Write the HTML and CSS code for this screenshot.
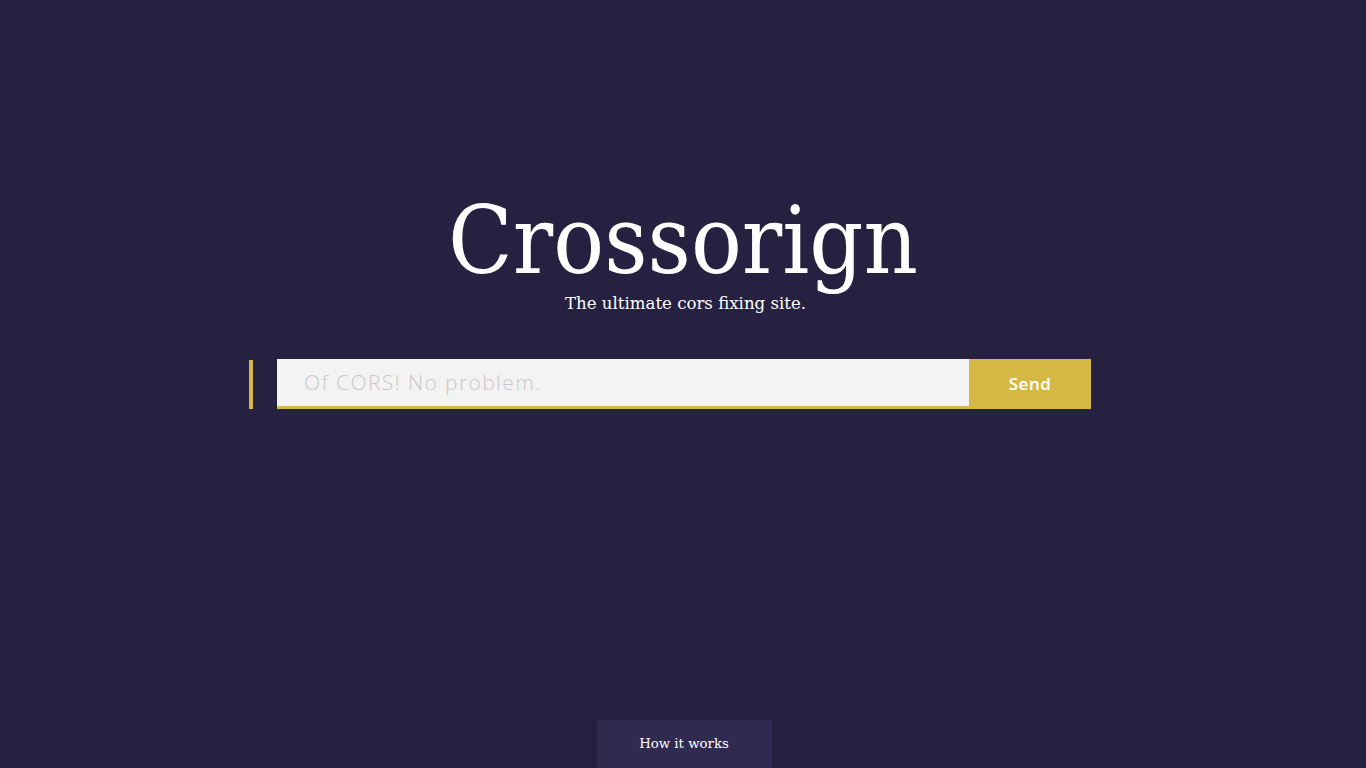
FILE: index.html
```html
<!DOCTYPE html>
<html>
<head>
<meta charset="utf-8">
<link rel="stylesheet" href="styles.css">
</head>
<body>
<main class="page">
  <header class="hero">
    <h1 class="title">Crossorign</h1>
    <p class="tagline">The ultimate cors fixing site.</p>
  </header>
  <form class="form">
    <span class="accent"></span>
    <input class="field" type="text" placeholder="Of CORS! No problem.">
    <button class="send" type="button">Send</button>
  </form>
  <footer class="footer">
    <a class="how" href="#">How it works</a>
  </footer>
</main>
</body>
</html>
```
FILE: styles.css
```css
html, body {
  margin: 0;
  padding: 0;
  height: 100%;
  background: #262140;
}
.page {
  height: 768px;
  display: flex;
  flex-direction: column;
  align-items: center;
}
.hero {
  margin-top: 187px;
  display: flex;
  flex-direction: column;
  align-items: center;
}
.title {
  margin: 0;
  font-family: "DejaVu Serif Condensed", "DejaVu Serif", serif;
  font-stretch: condensed;
  font-weight: normal;
  font-size: 94px;
  line-height: 107px;
  color: #fff;
}
.tagline {
  margin: 0 0 0 5px;
  font-family: "DejaVu Serif", serif;
  font-size: 16.6px;
  line-height: 20px;
  color: #fff;
}
.form {
  margin-top: 45px;
  margin-left: 2px;
  display: flex;
  width: 814px;
  height: 50px;
}
.accent {
  flex-shrink: 0;
  width: 4px;
  height: 49px;
  margin-top: 1px;
  margin-left: -28px;
  margin-right: 24px;
  background: #d6b944;
}
.field {
  flex: 1;
  min-width: 0;
  border: 0;
  border-bottom: 3px solid #d6b944;
  background: #f3f3f3;
  padding: 0 0 1px 27px;
  margin: 0;
  font-family: "Open Sans", sans-serif;
  font-weight: 300;
  font-size: 21px;
  letter-spacing: 1.4px;
  color: #555;
  outline: none;
}
.field::placeholder {
  color: #c9c9c9;
}
.send {
  flex-shrink: 0;
  width: 122px;
  border: 0;
  margin: 0;
  padding: 0 0 2px 0;
  background: #d6b944;
  color: #fff;
  font-family: "Open Sans", sans-serif;
  font-weight: 600;
  font-size: 17px;
  letter-spacing: 0.5px;
}
.footer {
  margin-top: auto;
  margin-left: 2px;
}
.how {
  display: block;
  width: 175px;
  height: 48px;
  line-height: 48px;
  text-align: center;
  background: #302a50;
  color: #fff;
  text-decoration: none;
  font-family: "DejaVu Serif", serif;
  font-size: 13.3px;
}
```
